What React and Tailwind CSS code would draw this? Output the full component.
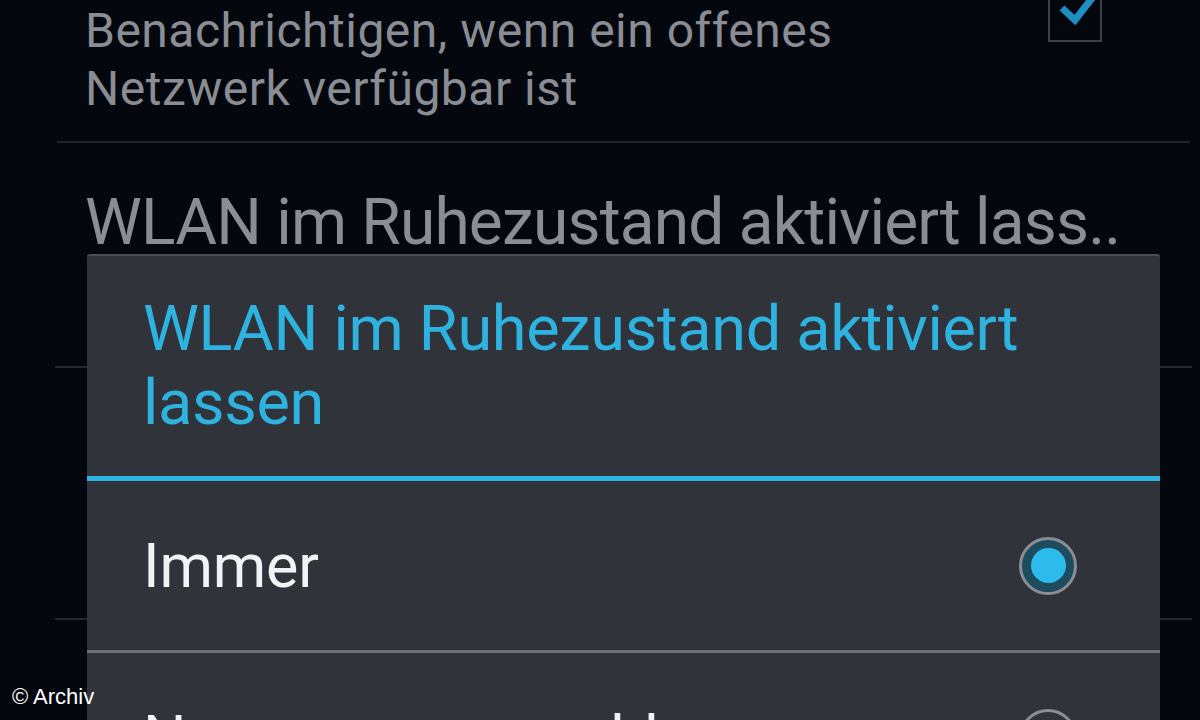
import React from "react";

function Checkbox() {
  return (
    <div className="relative w-[54px] h-[54px] border-2 border-[#3e4147] mt-[-14px] mr-[98px] shrink-0">
      <svg className="absolute left-[4px] top-[-4px]" width="50" height="46" viewBox="0 0 50 46">
        <path d="M8 22 L21 34 L46 2" fill="none" stroke="#1d8fc4" strokeWidth="7" strokeLinecap="butt" strokeLinejoin="miter" />
      </svg>
    </div>
  );
}

function Radio({ checked }) {
  return (
    <div
      className={
        checked
          ? "w-[58px] h-[58px] rounded-full border-[3px] border-[#8a8d93] flex items-center justify-center bg-[#1d4c5e] shrink-0"
          : "w-[58px] h-[58px] rounded-full border-[3px] border-[#8a8d93] flex items-center justify-center shrink-0"
      }
    >
      {checked && <div className="w-[35px] h-[35px] rounded-full bg-[#2dbbec]" />}
    </div>
  );
}

export default function App() {
  return (
    <div className="relative w-[1200px] h-[720px] overflow-hidden bg-[#04070e]" style={{ fontFamily: "Roboto, 'Liberation Sans', sans-serif" }}>
      {/* underlying settings list */}
      <div className="flex flex-col">
        <div className="flex justify-between items-start pl-[85px] pt-[2px] h-[141px]">
          <div className="text-[48px] leading-[58px] text-[#8a8d93] tracking-[0.5px]">
            Benachrichtigen, wenn ein offenes
            <br />
            Netzwerk verfügbar ist
          </div>
          <Checkbox />
        </div>
        <div className="ml-[57px] mr-[10px] h-[2px] bg-[#1f232a]" />
        <div className="pl-[85px] pt-[40px] h-[223px] text-[64px] leading-[80px] text-[#8a8d93] tracking-[-0.8px] whitespace-nowrap">
          WLAN im Ruhezustand aktiviert lass..
        </div>
        <div className="ml-[55px] mr-[8px] h-[2px] bg-[#24282f]" />
        <div className="h-[250px]" />
        <div className="ml-[55px] mr-[8px] h-[2px] bg-[#24282f]" />
      </div>

      {/* dialog */}
      <div className="absolute left-[87px] top-[254px] w-[1073px] h-[520px] bg-[#30333a] border-t-2 border-[#4b4e55] rounded-t-[3px]">
        <div className="h-[220px] pl-[56px] pt-[36px] text-[63px] leading-[74px] text-[#2eb2e0] tracking-[-0.3px]">
          WLAN im Ruhezustand aktiviert
          <br />
          lassen
        </div>
        <div className="h-[5px] bg-[#2db3e3]" />
        <div className="h-[169px] flex items-center justify-between pl-[56px] pr-[83px]">
          <span className="text-[61px] text-[#f2f3f5] tracking-[-0.2px] leading-none mt-[2px]">Immer</span>
          <Radio checked />
        </div>
        <div className="h-[3px] bg-[#6c6f76]" />
        <div className="h-[169px] flex items-center justify-between pl-[56px] pr-[83px]">
          <span className="text-[61px] text-[#f2f3f5] tracking-[-0.2px] leading-none mt-[2px]">Nur wenn angeschlossen</span>
          <Radio />
        </div>
      </div>

      {/* watermark */}
      <div className="absolute left-[12px] top-[682px] text-[22px] leading-[30px] text-white" style={{ fontFamily: "'Liberation Sans', Arial, sans-serif" }}>
        © Archiv
      </div>
    </div>
  );
}
